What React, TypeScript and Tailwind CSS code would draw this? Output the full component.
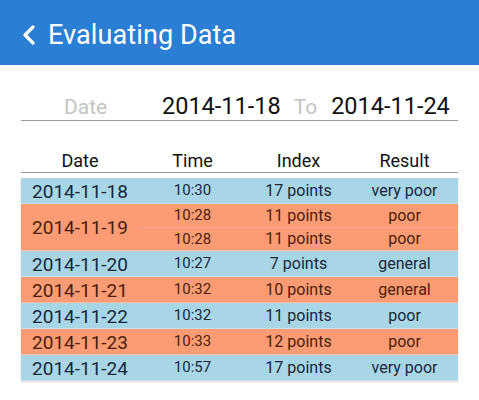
import React from "react";

type Row = { date: string; items: { time: string; index: string; result: string }[]; color: "blue" | "orange" };

const rows: Row[] = [
  { date: "2014-11-18", color: "blue", items: [{ time: "10:30", index: "17 points", result: "very poor" }] },
  {
    date: "2014-11-19",
    color: "orange",
    items: [
      { time: "10:28", index: "11 points", result: "poor" },
      { time: "10:28", index: "11 points", result: "poor" },
    ],
  },
  { date: "2014-11-20", color: "blue", items: [{ time: "10:27", index: "7 points", result: "general" }] },
  { date: "2014-11-21", color: "orange", items: [{ time: "10:32", index: "10 points", result: "general" }] },
  { date: "2014-11-22", color: "blue", items: [{ time: "10:32", index: "11 points", result: "poor" }] },
  { date: "2014-11-23", color: "orange", items: [{ time: "10:33", index: "12 points", result: "poor" }] },
  { date: "2014-11-24", color: "blue", items: [{ time: "10:57", index: "17 points", result: "very poor" }] },
];

export default function App() {
  return (
    <div className="w-[479px] h-[400px] bg-white overflow-hidden" style={{ fontFamily: "Roboto, 'Noto Sans', sans-serif" }}>
      <div className="h-[65px] bg-[#2a7fd4] flex items-center pl-[22px] pt-[5px]">
        <svg width="14" height="20" viewBox="0 0 14 20" className="mr-[12px]">
          <path d="M11 2 L3 10 L11 18" fill="none" stroke="white" strokeWidth="3.2" strokeLinecap="round" strokeLinejoin="round" />
        </svg>
        <span className="text-white text-[27px] leading-none tracking-[0.1px]">Evaluating Data</span>
      </div>

      <div className="mx-[21px] mt-[25px] h-[31px] border-b border-[#9a9a9a] flex items-center pt-[4px]">
        <span className="ml-[43px] w-[98px] text-[21px] text-[#c4c4c4] leading-none">Date</span>
        <span className="text-[23.5px] text-[#111] leading-none">2014-11-18</span>
        <span className="ml-[13px] text-[21px] text-[#c4c4c4] leading-none">To</span>
        <span className="ml-[14px] text-[23.5px] text-[#111] leading-none">2014-11-24</span>
      </div>

      <div className="mx-[21px] mt-[24px]">
        <div className="flex h-[28px] border-b border-[#9a9a9a] items-center text-[18px] text-[#111] pt-[3px]">
          <div className="w-[118px] text-center">Date</div>
          <div className="w-[107px] text-center">Time</div>
          <div className="w-[105px] text-center">Index</div>
          <div className="flex-1 text-center">Result</div>
        </div>
        <div className="mt-[5px] shadow-[0_1px_2px_rgba(0,0,0,0.15)]">
          {rows.map((r) => (
            <div
              key={r.date}
              className={`flex border-b border-white/30 ${r.color === "blue" ? "bg-[#a9d6e6] text-[#16283a]" : "bg-[#fd9c74] text-[#4a1d08]"}`}
            >
              <div className="w-[118px] flex items-center justify-center text-[19px] leading-none pt-[1px]">{r.date}</div>
              <div className="flex-1 flex flex-col">
                {r.items.map((it, i) => (
                  <div
                    key={i}
                    className={`flex items-center leading-none ${r.items.length > 1 ? "h-[23px]" : "h-[25px]"} ${i > 0 ? "border-t border-[#f0a888]" : ""}`}
                  >
                    <div className="w-[107px] text-center text-[15px]">{it.time}</div>
                    <div className="w-[105px] text-center text-[16px]">{it.index}</div>
                    <div className="flex-1 text-center text-[16px]">{it.result}</div>
                  </div>
                ))}
              </div>
            </div>
          ))}
        </div>
      </div>
    </div>
  );
}
